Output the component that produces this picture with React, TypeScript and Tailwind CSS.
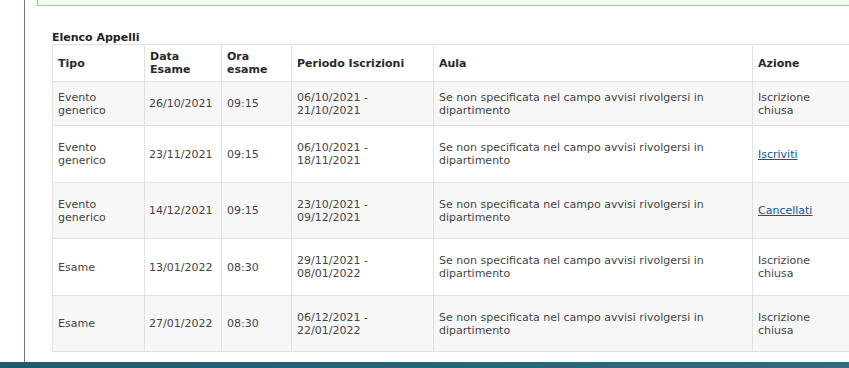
import React from 'react';

const rows = [
  { tipo: ['Evento', 'generico'], data: '26/10/2021', ora: '09:15', periodo: ['06/10/2021 -', '21/10/2021'], azione: 'chiusa', h: 'h-[44px]', bg: 'bg-[#f7f7f7]' },
  { tipo: ['Evento', 'generico'], data: '23/11/2021', ora: '09:15', periodo: ['06/10/2021 -', '18/11/2021'], azione: 'Iscriviti', h: 'h-[57px]', bg: 'bg-white' },
  { tipo: ['Evento', 'generico'], data: '14/12/2021', ora: '09:15', periodo: ['23/10/2021 -', '09/12/2021'], azione: 'Cancellati', h: 'h-[56px]', bg: 'bg-[#f7f7f7]' },
  { tipo: ['Esame'], data: '13/01/2022', ora: '08:30', periodo: ['29/11/2021 -', '08/01/2022'], azione: 'chiusa', h: 'h-[57px]', bg: 'bg-white' },
  { tipo: ['Esame'], data: '27/01/2022', ora: '08:30', periodo: ['06/12/2021 -', '22/01/2022'], azione: 'chiusa', h: 'h-[56px]', bg: 'bg-[#f7f7f7]' },
];

const cell = 'border border-[#e2e2e2] px-[5px] align-middle text-left';

export default function App() {
  return (
    <div className="w-[849px] h-[368px] overflow-hidden bg-white text-[11px] leading-[13px] text-[#444] font-['DejaVu_Sans',Verdana,sans-serif]">
      <div className="h-[362px] pl-[24px]">
        <div className="h-full border-l-[1.5px] border-[#6c7c92] pl-[12px]">
          {/* notice box, cut off at top */}
          <div className="h-[6px] w-[900px] border-l border-b border-[#9ccf9c] bg-[#f1fbf0]" />

          <div className="pl-[15px] pt-[25px]">
            <div className="font-bold text-[#222] leading-[13px]">Elenco Appelli</div>
            <table className="table-fixed border-collapse w-[797px]">
              <colgroup>
                <col className="w-[92px]" />
                <col className="w-[77px]" />
                <col className="w-[70px]" />
                <col className="w-[142px]" />
                <col className="w-[319px]" />
                <col className="w-[97px]" />
              </colgroup>
              <thead>
                <tr className="h-[37px] bg-white font-bold text-[#2a2a2a]">
                  <th className={cell}>Tipo</th>
                  <th className={cell}>Data<br />Esame</th>
                  <th className={cell}>Ora<br />esame</th>
                  <th className={cell}>Periodo Iscrizioni</th>
                  <th className={cell}>Aula</th>
                  <th className={cell}>Azione</th>
                </tr>
              </thead>
              <tbody>
                {rows.map((r, i) => (
                  <tr key={i} className={`${r.h} ${r.bg}`}>
                    <td className={cell}>
                      {r.tipo.map((t, j) => (
                        <div key={j}>{t}</div>
                      ))}
                    </td>
                    <td className={`${cell} pl-[4px]`}>{r.data}</td>
                    <td className={cell}>{r.ora}</td>
                    <td className={cell}>
                      <div>{r.periodo[0]}</div>
                      <div>{r.periodo[1]}</div>
                    </td>
                    <td className={cell}>
                      <div>Se non specificata nel campo avvisi rivolgersi in</div>
                      <div>dipartimento</div>
                    </td>
                    <td className={cell}>
                      {r.azione === 'chiusa' ? (
                        <>
                          <div>Iscrizione</div>
                          <div>chiusa</div>
                        </>
                      ) : (
                        <a href="#" className="text-[#1d4f8a] underline">{r.azione}</a>
                      )}
                    </td>
                  </tr>
                ))}
              </tbody>
            </table>
          </div>
        </div>
      </div>
      <div className="h-[6px] bg-gradient-to-r from-[#1f5a72] to-[#2a6f86]" />
    </div>
  );
}
